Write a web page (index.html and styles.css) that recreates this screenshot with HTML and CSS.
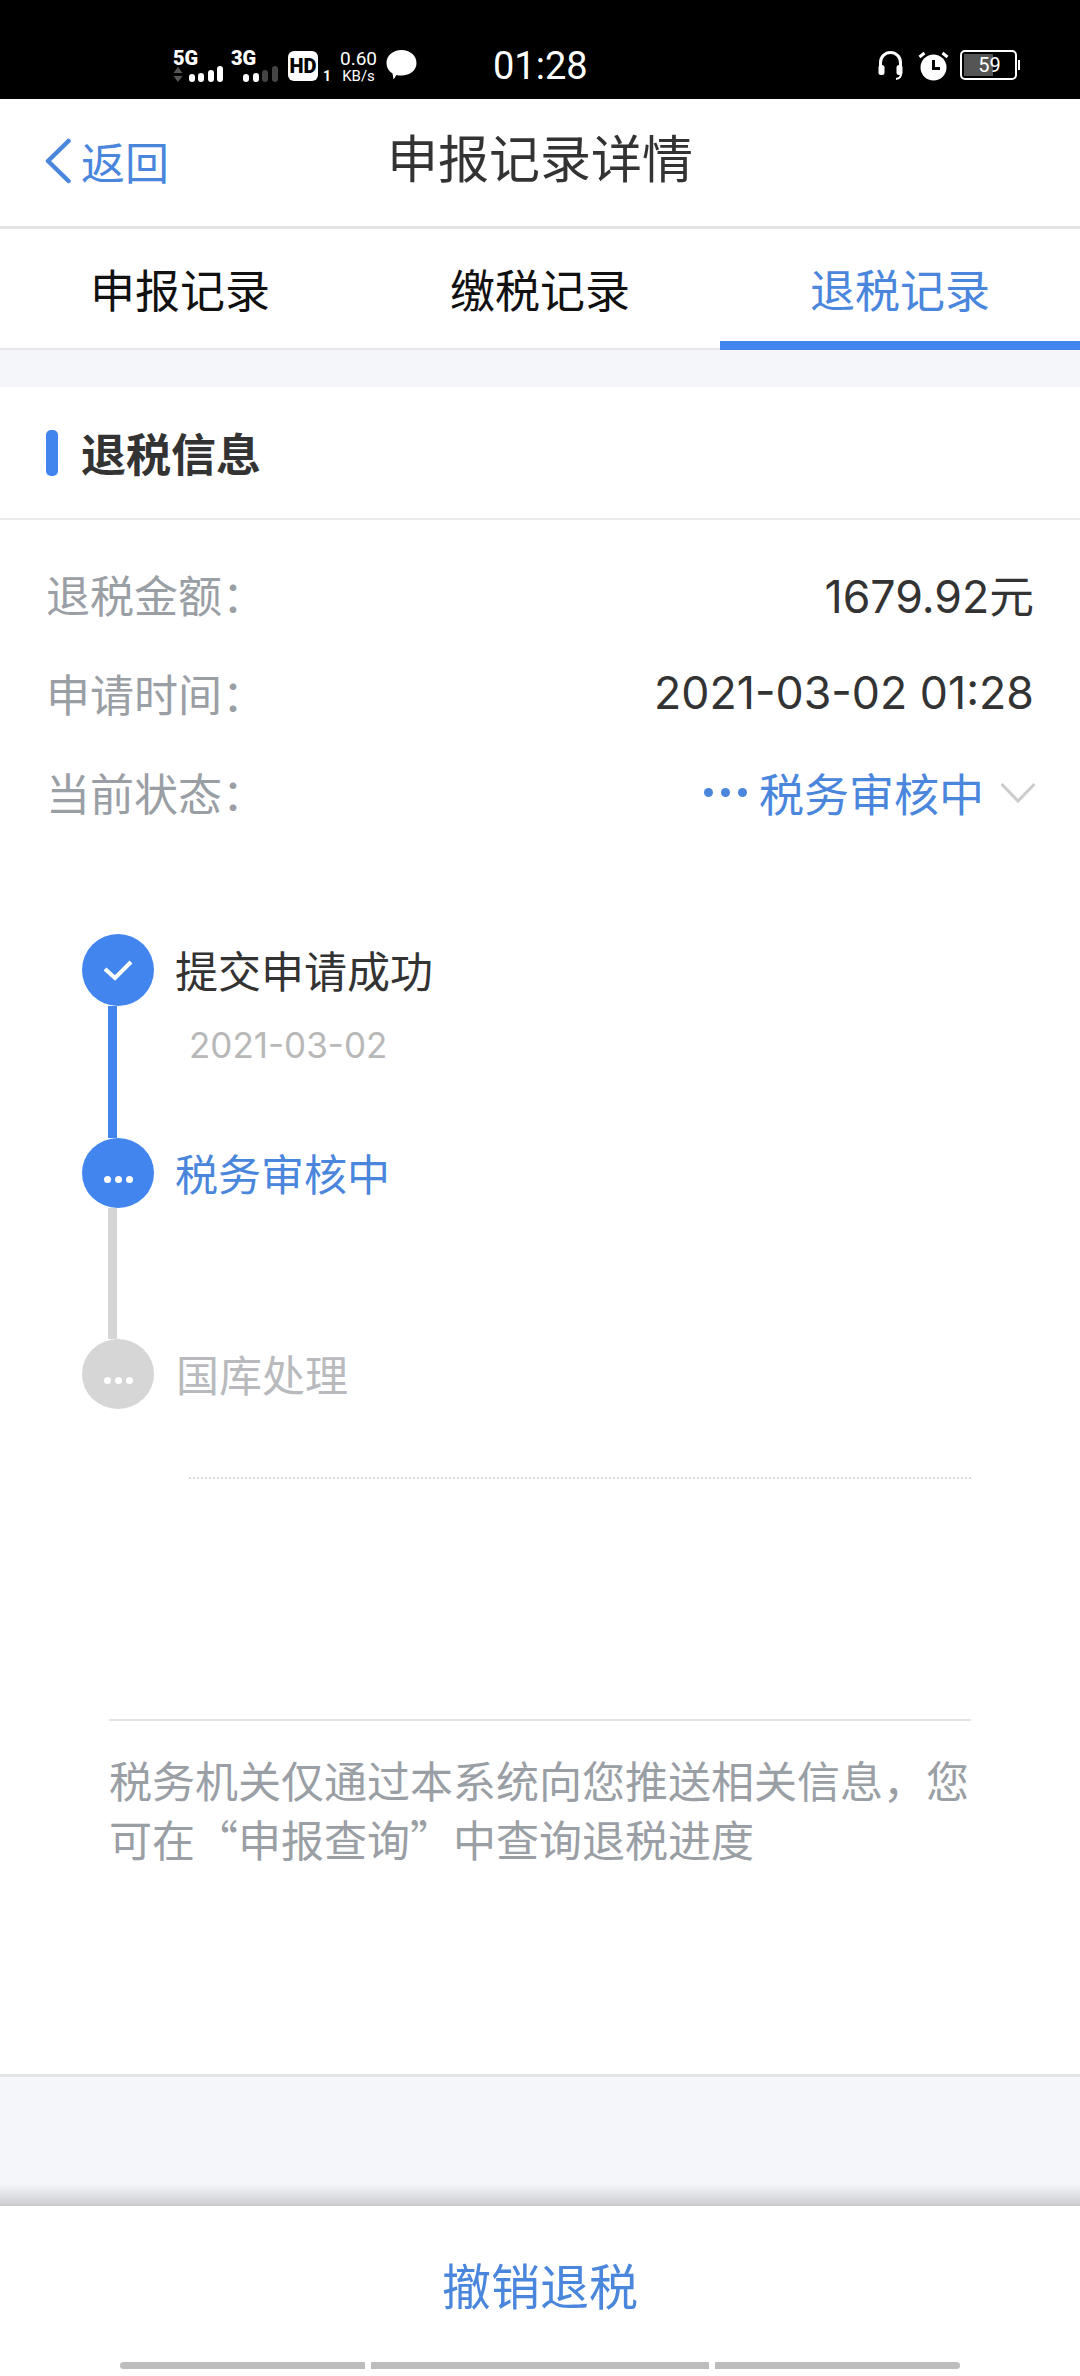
FILE: index.html
```html
<!DOCTYPE html>
<html lang="zh-CN">
<head>
    <meta charset="UTF-8">
    <meta name="viewport" content="width=device-width, initial-scale=1.0">
    <title>申报记录详情</title>
    <link rel="stylesheet" href="styles.css">
</head>
<body>
    <div class="status-bar">
        <div class="status-left">
            <div class="net">
                <span class="net-name">5G</span>
                <div class="net-row">
                    <svg class="arrows" width="10" height="15" viewBox="0 0 10 15"><path d="M5 0l4.500 6h-9zM5 15l4.500-6h-9z" fill="#555"/></svg>
                    <span class="sig s2"></span><span class="sig s3"></span><span class="sig s4"></span><span class="sig s5"></span>
                </div>
            </div>
            <div class="net net-second">
                <span class="net-name">3G</span>
                <div class="net-row">
                    <span class="sig s2"></span><span class="sig s3"></span><span class="sig s4 off"></span><span class="sig s5 off"></span>
                </div>
            </div>
            <span class="hd">HD</span>
            <span class="hd-num">1</span>
            <div class="speed"><span class="speed-num">0.60</span><span class="speed-unit">KB/s</span></div>
            <svg class="bubble" width="31" height="30" viewBox="0 0 31 30"><path d="M15.500 0C24 0 30.500 5.500 30.500 13S24 25.500 15.500 25.500c-2 0-3.500-.2-5-.6L7.500 29.500 6.500 23.500C2.500 21 .5 17.500.5 13 .5 5.500 7 0 15.500 0z" fill="#fff"/></svg>
        </div>
        <span class="clock">01:28</span>
        <div class="status-right">
            <svg width="25" height="31" viewBox="0 0 25 31" fill="none"><path d="M2.500 17V12.500a10 10 0 0 1 20 0V17" stroke="#fff" stroke-width="3"/><rect x="0.500" y="15" width="6" height="10" rx="2.500" fill="#fff"/><rect x="18.500" y="15" width="6" height="10" rx="2.500" fill="#fff"/><path d="M23 24c0 3-1.500 4.500-5 5" stroke="#fff" stroke-width="2"/></svg>
            <svg class="alarm" width="31" height="30" viewBox="0 0 31 30"><circle cx="15.500" cy="16.500" r="13" fill="#fff"/><path d="M15.500 9v8.500h6.500" fill="none" stroke="#000" stroke-width="3"/><path d="M1.500 6l5-4M29.500 6l-5-4" stroke="#fff" stroke-width="3"/></svg>
            <div class="battery"><div class="battery-fill"></div><span class="battery-num">59</span></div>
            <span class="battery-tip"></span>
        </div>
    </div>

    <div class="nav">
        <a class="back">
            <svg width="28" height="46" viewBox="0 0 28 46" fill="none"><path d="M24.500 3L4 23l20.500 20" stroke="#4a86dc" stroke-width="4.500" stroke-linecap="round" stroke-linejoin="round"/></svg>
            <span>返回</span>
        </a>
        <h1 class="nav-title">申报记录详情</h1>
    </div>

    <div class="tabs">
        <div class="tab">申报记录</div>
        <div class="tab">缴税记录</div>
        <div class="tab active">退税记录</div>
    </div>

    <div class="card">
        <div class="card-head">
            <span class="card-mark"></span>
            <h2>退税信息</h2>
        </div>
        <div class="info">
            <div class="info-row"><span class="info-label">退税金额：</span><span class="info-value">1679.92元</span></div>
            <div class="info-row"><span class="info-label">申请时间：</span><span class="info-value">2021-03-02 01:28</span></div>
            <div class="info-row">
                <span class="info-label">当前状态：</span>
                <span class="info-status">
                    <span class="status-dots"><i></i><i></i><i></i></span>
                    税务审核中
                    <svg width="36" height="22" viewBox="0 0 36 22" fill="none"><path d="M1.500 2l16.500 17L34.500 2" stroke="#ccc" stroke-width="3"/></svg>
                </span>
            </div>
        </div>

        <div class="timeline">
            <div class="step step-done">
                <div class="step-rail">
                    <span class="step-node">
                        <svg width="32" height="24" viewBox="0 0 32 24" fill="none"><path d="M3 11l10 9L29 4" stroke="#fff" stroke-width="4"/></svg>
                    </span>
                    <span class="step-line"></span>
                </div>
                <div class="step-body">
                    <div class="step-name">提交申请成功</div>
                    <div class="step-date">2021-03-02</div>
                </div>
            </div>
            <div class="step step-current">
                <div class="step-rail">
                    <span class="step-node"><span class="node-dots"><i></i><i></i><i></i></span></span>
                    <span class="step-line"></span>
                </div>
                <div class="step-body">
                    <div class="step-name">税务审核中</div>
                </div>
            </div>
            <div class="step step-todo">
                <div class="step-rail">
                    <span class="step-node"><span class="node-dots"><i></i><i></i><i></i></span></span>
                </div>
                <div class="step-body">
                    <div class="step-name">国库处理</div>
                </div>
            </div>
        </div>

        <div class="dotted"></div>

        <p class="note">税务机关仅通过本系统向您推送相关信息，您可在“申报查询”中查询退税进度</p>
    </div>

    <div class="gap"></div>

    <div class="footer">
        <div class="cancel">撤销退税</div>
        <div class="nav-bars">
            <span class="bar bar-left"></span>
            <span class="bar bar-mid"></span>
            <span class="bar bar-right"></span>
        </div>
    </div>
</body>
</html>
```

FILE: styles.css
```css
* {
    box-sizing: border-box;
}
html, body {
    margin: 0;
    padding: 0;
}
body {
    width: 1080px;
    height: 2376px;
    overflow: hidden;
    background-color: #f4f6fa;
    color: #333;
    font-family: Roboto, "Noto Sans CJK SC", sans-serif;
}
h1, h2, p {
    margin: 0;
    font-weight: normal;
}

/* status bar */
.status-bar {
    height: 99px;
    background-color: #000;
    color: #fff;
    display: flex;
    align-items: flex-start;
    padding: 50px 0 0 173px;
}
.status-left {
    width: 320px;
    display: flex;
    align-items: flex-start;
}
.net {
    width: 48px;
    display: flex;
    flex-direction: column;
    font-size: 20px;
    font-weight: 900;
    line-height: 17px;
}
.net-name {
    height: 18px;
}
.net-row {
    display: flex;
    align-items: flex-end;
    gap: 3.500px;
    height: 14px;
}
.net-second {
    margin-left: 10px;
    width: 48px;
    padding-left: 0;
}
.net-second .net-row {
    padding-left: 12px;
}
.arrows {
    margin-right: 2px;
    flex: none;
}
.sig {
    width: 6px;
    flex: none;
    background-color: #fff;
    border-radius: 3px;
}
.s2 { height: 8px; }
.s3 { height: 9px; }
.s4 { height: 12px; }
.s5 { height: 16px; }
.sig.off {
    background-color: #444;
}
.hd {
    margin: 1px 0 0 9px;
    width: 30px;
    height: 30px;
    background-color: #fff;
    color: #000;
    border-radius: 6px;
    font-size: 20px;
    font-weight: 900;
    line-height: 30px;
    text-align: center;
}
.hd-num {
    margin: 20px 0 0 5px;
    width: 15px;
    font-size: 14px;
    font-weight: 700;
    line-height: 12px;
}
.speed {
    margin: 0 0 0 2px;
    width: 37px;
    display: flex;
    flex-direction: column;
    align-items: center;
}
.speed-num {
    font-size: 19px;
    line-height: 18px;
}
.speed-unit {
    font-size: 15px;
    line-height: 17px;
}
.bubble {
    margin-left: 9px;
}
.clock {
    width: 100px;
    margin-top: -4px;
    font-size: 38px;
    line-height: 40px;
    white-space: nowrap;
}
.status-right {
    margin-left: 285px;
    display: flex;
    align-items: flex-start;
}
.alarm {
    margin-left: 15px;
    margin-top: 1px;
}
.battery {
    margin-left: 11px;
    width: 57px;
    height: 30px;
    border: 2px solid #fff;
    border-radius: 5px;
    padding: 2px;
    display: flex;
    align-items: stretch;
    position: relative;
}
.battery-fill {
    width: 29px;
    background-color: #555;
}
.battery-num {
    position: absolute;
    left: 0;
    right: 0;
    top: 1px;
    padding-left: 2px;
    font-size: 20px;
    line-height: 24px;
    text-align: center;
}
.battery-tip {
    width: 2px;
    height: 10px;
    margin: 10px 0 0 1px;
    background-color: #fff;
}

/* header */
.nav {
    height: 130px;
    background-color: #fff;
    border-bottom: 3px solid #e3e4e6;
    display: flex;
    align-items: center;
    position: relative;
    padding: 0 0 4px 44px;
}
.back {
    display: flex;
    align-items: center;
    gap: 9px;
    color: #4a86dc;
    font-size: 44px;
}
.nav-title {
    position: absolute;
    left: 0;
    right: 0;
    top: 33px;
    text-align: center;
    font-size: 51px;
    line-height: 58px;
    color: #333;
}

/* tabs */
.tabs {
    height: 121px;
    background-color: #fff;
    border-bottom: 2px solid #e6e7e9;
    display: flex;
}
.tab {
    flex: 1;
    height: 121px;
    padding-top: 9px;
    text-align: center;
    font-size: 45px;
    line-height: 110px;
    color: #111;
}
.tab.active {
    color: #4a86dc;
    border-bottom: 9px solid #4285ee;
}

/* card */
.card {
    margin-top: 37px;
    height: 1690px;
    background-color: #fff;
    border-bottom: 3px solid #e3e4e8;
}
.card-head {
    height: 133px;
    border-bottom: 2px solid #ebebed;
    display: flex;
    align-items: center;
    padding: 0 0 0 46px;
}
.card-mark {
    width: 12px;
    height: 46px;
    background-color: #4285ee;
    border-radius: 5px;
    margin-right: 23px;
}
.card-head h2 {
    padding-bottom: 1px;
    font-size: 45px;
    font-weight: 700;
    color: #333;
}
.info {
    padding: 24px 46px 0;
}
.info-row {
    height: 99px;
    display: flex;
    align-items: center;
    justify-content: space-between;
}
.info-label {
    font-family: "Noto Sans CJK SC", sans-serif;
    font-size: 44px;
    color: #9a9ea5;
}
.info-value {
    font-family: Inter, "Noto Sans CJK SC", sans-serif;
    font-size: 44.700px;
    color: #333;
}
.info-status {
    display: flex;
    align-items: center;
    padding-top: 2px;
    font-size: 45px;
    color: #4a86dc;
}
.info-status svg {
    margin-left: 16px;
    margin-right: -2px;
}
.status-dots {
    display: flex;
    gap: 8px;
    margin-right: 12px;
}
.status-dots i {
    width: 9px;
    height: 9px;
    border-radius: 50%;
    background-color: #4a86dc;
}

/* timeline */
.timeline {
    margin-top: 93px;
    padding-left: 82px;
}
.step {
    display: flex;
}
.step-done {
    height: 204px;
}
.step-current {
    height: 201px;
}
.step-todo {
    height: 70px;
}
.step-rail {
    width: 72px;
    display: flex;
    flex-direction: column;
    align-items: center;
}
.step-node {
    width: 72px;
    height: 70px;
    flex: none;
    border-radius: 50%;
    display: flex;
    align-items: center;
    justify-content: center;
    background-color: #4285ee;
}
.step-done .step-node {
    height: 72px;
}
.step-line {
    width: 9px;
    flex: 1;
    margin-right: 11px;
    background-color: #4285ee;
}
.step-current .step-line {
    background-color: #d6d6d6;
}
.step-todo .step-node {
    background-color: #d6d6d6;
}
.node-dots {
    display: flex;
    gap: 4px;
    margin-top: 12px;
}
.node-dots i {
    width: 7px;
    height: 7px;
    border-radius: 50%;
    background-color: #fff;
}
.step-body {
    padding: 9px 0 0 21px;
}
.step-done .step-body {
    padding-top: 10px;
}
.step-name {
    font-size: 43px;
    line-height: 58px;
    color: #333;
}
.step-date {
    margin: 22px 0 0 14px;
    font-family: Inter, sans-serif;
    font-size: 35px;
    line-height: 42px;
    color: #b8b8b8;
}
.step-current .step-name {
    color: #4a86dc;
}
.step-todo .step-name {
    margin-left: 1px;
    color: #b8babd;
}
.dotted {
    margin: 68px 109px 0 189px;
    border-top: 2px dotted #dcdcdc;
}
.note {
    margin: 240px 109px 0;
    padding-top: 29px;
    border-top: 2px solid #e4e4e6;
    font-family: "Noto Sans CJK SC", sans-serif;
    font-size: 43px;
    line-height: 59px;
    color: #9a9ea5;
}

/* bottom */
.gap {
    height: 127px;
    background: linear-gradient(to bottom, #f4f6fa 84%, #d0d0d4 100%);
}
.footer {
    height: 173px;
    background-color: #fff;
    border-top: 2px solid #c9c9ce;
    display: flex;
    flex-direction: column;
    align-items: center;
}
.cancel {
    margin-top: 53px;
    font-size: 49px;
    line-height: 60px;
    color: #4a86dc;
}
.nav-bars {
    margin-top: 43px;
    width: 840px;
    display: flex;
    gap: 6px;
}
.bar {
    height: 7px;
    background-color: #bdbdbd;
}
.bar-left {
    width: 245px;
    border-radius: 4px 0 0 4px;
}
.bar-mid {
    width: 338px;
}
.bar-right {
    width: 245px;
    border-radius: 0 4px 4px 0;
}
```
